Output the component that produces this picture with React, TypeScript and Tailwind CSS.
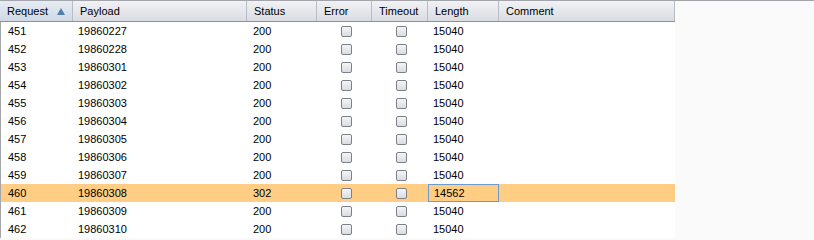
import React from 'react';

type Result = {
  request: number;
  payload: string;
  status: number;
  length: number;
};

const rows: Result[] = [
  { request: 451, payload: '19860227', status: 200, length: 15040 },
  { request: 452, payload: '19860228', status: 200, length: 15040 },
  { request: 453, payload: '19860301', status: 200, length: 15040 },
  { request: 454, payload: '19860302', status: 200, length: 15040 },
  { request: 455, payload: '19860303', status: 200, length: 15040 },
  { request: 456, payload: '19860304', status: 200, length: 15040 },
  { request: 457, payload: '19860305', status: 200, length: 15040 },
  { request: 458, payload: '19860306', status: 200, length: 15040 },
  { request: 459, payload: '19860307', status: 200, length: 15040 },
  { request: 460, payload: '19860308', status: 302, length: 14562 },
  { request: 461, payload: '19860309', status: 200, length: 15040 },
  { request: 462, payload: '19860310', status: 200, length: 15040 },
];

const selectedRow = 460;

function Checkbox() {
  return (
    <span className="block h-[11px] w-[11px] rounded-[2px] border border-[#7d8087] bg-gradient-to-b from-[#f4f5f7] to-[#d9dce2]" />
  );
}

function HeaderCell({
  label,
  className,
  sorted,
}: {
  label: string;
  className: string;
  sorted?: boolean;
}) {
  return (
    <div
      className={`flex h-full items-center justify-between border-r border-[#b9bcc2] pl-[7px] pr-[6px] ${
        sorted
          ? 'bg-gradient-to-b from-[#e6ecf3] to-[#cfd9e5]'
          : 'bg-gradient-to-b from-[#f1f2f5] to-[#d9dce2]'
      } ${className}`}
    >
      <span>{label}</span>
      {sorted && (
        <svg width="8" height="7" viewBox="0 0 8 7" className="mr-[1px]">
          <path d="M4 0 L8 7 L0 7 Z" fill="#4f7fae" />
        </svg>
      )}
    </div>
  );
}

export default function App() {
  return (
    <div
      className="h-[240px] w-[814px] overflow-hidden bg-[#fafafa] text-[11px] text-black"
      style={{ fontFamily: '"Liberation Sans", Arial, sans-serif' }}
    >
      <div className="border-t border-[#a3a5aa]">
        <div className="w-[675px]">
          {/* column headers */}
          <div className="flex h-[21px] border-b border-[#8e9095]">
            <HeaderCell label="Request" sorted className="w-[73px]" />
            <HeaderCell label="Payload" className="w-[174px]" />
            <HeaderCell label="Status" className="w-[70px]" />
            <HeaderCell label="Error" className="w-[55px]" />
            <HeaderCell label="Timeout" className="w-[56px]" />
            <HeaderCell label="Length" className="w-[71px]" />
            <HeaderCell label="Comment" className="w-[176px] border-[#8e9095]" />
          </div>

          {/* result rows */}
          <div className="border-l border-[#a3a5aa] bg-white">
            {rows.map((row) => {
              const selected = row.request === selectedRow;
              return (
                <div
                  key={row.request}
                  className={`flex h-[18px] items-center ${selected ? 'bg-[#ffcd83]' : ''}`}
                >
                  <div className="w-[72px] pl-[7px]">{row.request}</div>
                  <div className="w-[174px] pl-[5px]">{row.payload}</div>
                  <div className="w-[70px] pl-[6px]">{row.status}</div>
                  <div className="flex w-[55px] justify-center pl-[4px]">
                    <Checkbox />
                  </div>
                  <div className="flex w-[56px] justify-center pl-[2px]">
                    <Checkbox />
                  </div>
                  <div
                    className={`flex h-full w-[71px] items-center pl-[5px] ${
                      selected ? 'border border-[#6d9bd0] pl-[4px]' : ''
                    }`}
                  >
                    {row.length}
                  </div>
                  <div className="w-[176px]" />
                </div>
              );
            })}
          </div>
        </div>
      </div>
    </div>
  );
}
